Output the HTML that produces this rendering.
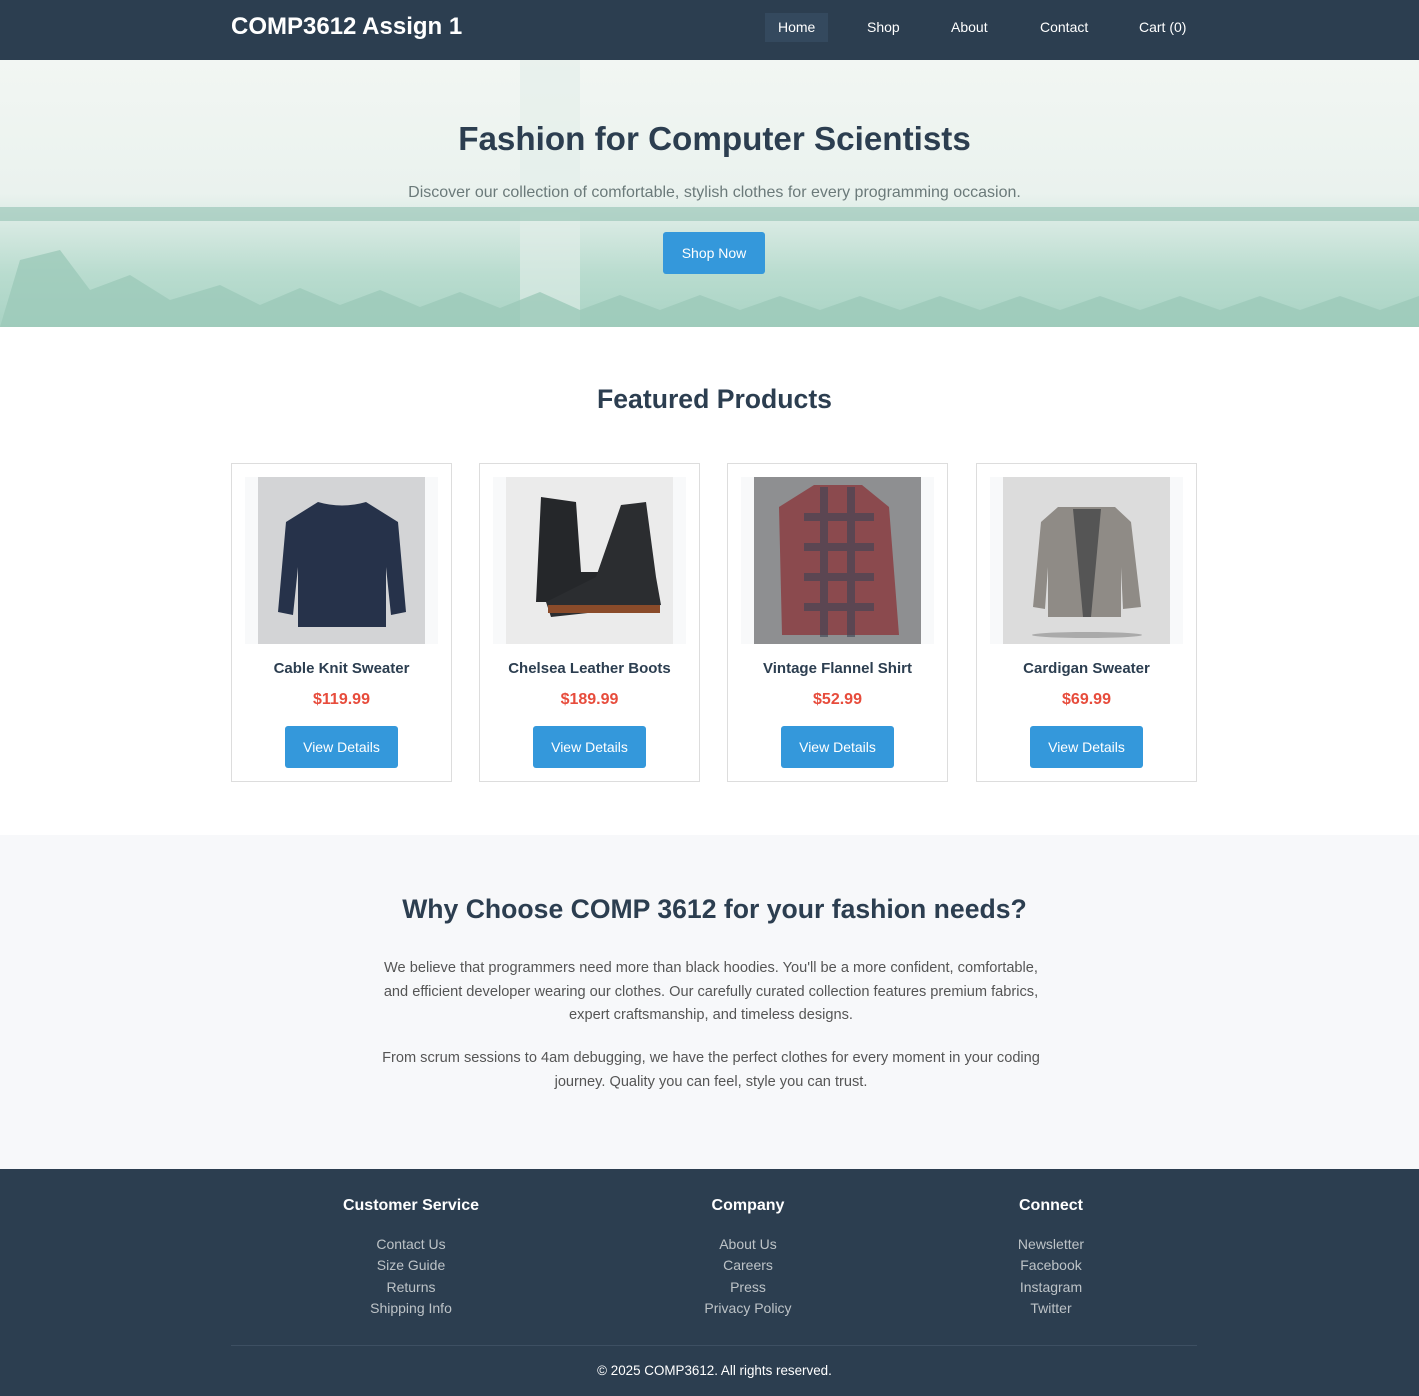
<!DOCTYPE html>
<html><head><meta charset="utf-8"><style>
*{margin:0;padding:0;box-sizing:border-box}
body{width:1419px;height:1396px;font-family:"Liberation Sans",Arial,sans-serif;background:#fff;position:relative;overflow:hidden;color:#2c3e50}
.nav{position:absolute;left:0;top:0;width:1419px;height:60px;background:#2c3e50}
.logo{position:absolute;left:231px;top:13px;color:#fff;font-size:24px;font-weight:bold}
.nav a{position:absolute;top:13px;height:29px;line-height:29px;color:#fff;font-size:14px;text-decoration:none;padding:0 13px}
.hero{position:absolute;left:0;top:60px;width:1419px;height:267px;overflow:hidden;background:linear-gradient(180deg,#f2f6f3 0%,#eaf2ee 50%,#b9dccf 80%,#a9d3c4 100%)}
.hero h1{position:absolute;left:5px;width:100%;top:61px;text-align:center;font-size:33.2px;color:#2c3e50}
.hero p{position:absolute;left:5px;width:100%;top:124px;text-align:center;font-size:16px;color:#6b7a7a}
.btn{position:absolute;background:#3498db;color:#fff;font-size:14px;text-align:center;border-radius:3px}
h2{position:absolute;left:5px;width:100%;text-align:center;font-size:26.6px;color:#2c3e50}
.card{position:absolute;top:463px;width:221px;height:319px;border:1px solid #ddd;background:#fff}
.imgw{position:absolute;left:13px;top:13px;width:193px;height:167px;background:#f8f9fa}
.imgw svg{position:absolute;left:13px;top:0}
.card .t{position:absolute;left:0;width:100%;top:196px;text-align:center;font-size:15px;font-weight:bold;color:#2c3e50}
.card .p{position:absolute;left:0;width:100%;top:227px;text-align:center;font-size:16px;font-weight:bold;color:#e74c3c}
.card .btn{left:53px;top:262px;width:113px;height:42px;line-height:42px}
.why{position:absolute;left:0;top:835px;width:1419px;height:334px;background:#f7f8fa}
.why p{position:absolute;left:379px;width:670px;text-align:center;font-size:14.6px;line-height:23.5px;color:#555}
.foot{position:absolute;left:0;top:1169px;width:1419px;height:227px;background:#2c3e50}
.col{position:absolute;top:28px;width:300px;margin-left:-150px;text-align:center}
.col h4{font-size:16px;color:#fff;margin-bottom:19px}
.col div{font-size:14px;color:#bdc3c7;line-height:21.3px}
.hr{position:absolute;left:231px;top:176px;width:966px;height:1px;background:#3d4f62}
.copy{position:absolute;left:5px;width:100%;top:194px;text-align:center;color:#fff;font-size:13.4px}
</style></head><body>
<div class="nav">
<div class="logo">COMP3612 Assign 1</div>
<a style="left:765px;background:#34495e">Home</a>
<a style="left:854px">Shop</a>
<a style="left:938px">About</a>
<a style="left:1027px">Contact</a>
<a style="left:1126px">Cart (0)</a>
</div>
<div class="hero">
<svg width="1419" height="267" style="position:absolute;left:0;top:0">
<rect x="520" y="0" width="60" height="267" fill="#e3efe9" opacity=".6"/>
<rect x="0" y="147" width="1419" height="14" fill="#9cc8b9" opacity=".7"/>
<g fill="#9cc9b9" opacity=".8">
<path d="M0 267 L20 200 L60 190 L90 230 L130 215 L170 240 L220 225 L260 245 L300 228 L340 245 L380 230 L420 247 L460 232 L500 248 L540 232 L580 250 L620 235 L660 250 L700 235 L740 250 L780 236 L820 250 L860 236 L900 250 L940 236 L980 250 L1020 236 L1060 250 L1100 236 L1140 250 L1180 236 L1220 250 L1260 236 L1300 250 L1340 236 L1380 250 L1419 236 L1419 267Z"/>
</g>
</svg>
<h1>Fashion for Computer Scientists</h1>
<p>Discover our collection of comfortable, stylish clothes for every programming occasion.</p>
<div class="btn" style="left:663px;top:172px;width:102px;height:42px;line-height:42px">Shop Now</div>
</div>
<h2 style="top:384px">Featured Products</h2>

<div class="card" style="left:231px"><div class="imgw"><svg width="167" height="167"><rect width="167" height="167" fill="#d3d4d6"/><path d="M60 25 Q84 32 108 25 L140 45 L148 135 L133 138 L128 90 L128 150 L40 150 L40 90 L35 138 L20 135 L28 45Z" fill="#26324a"/></svg></div><div class="t">Cable Knit Sweater</div><div class="p">$119.99</div><div class="btn">View Details</div></div>
<div class="card" style="left:479px"><div class="imgw"><svg width="167" height="167"><rect width="167" height="167" fill="#ebebeb"/><path d="M35 20 L70 25 L75 95 L120 95 L120 125 L30 125Z" fill="#25272a"/><path d="M115 28 L140 25 L150 100 L155 128 L45 140 L40 125 L90 100Z" fill="#2b2d30"/><rect x="42" y="128" width="112" height="8" fill="#8a4b2a"/></svg></div><div class="t">Chelsea Leather Boots</div><div class="p">$189.99</div><div class="btn">View Details</div></div>
<div class="card" style="left:727px"><div class="imgw"><svg width="167" height="167"><rect width="167" height="167" fill="#8e8f91"/><path d="M60 8 L108 8 L135 30 L145 158 L28 158 L25 30Z" fill="#8b4a4e"/><path d="M50 40 H120 M50 70 H120 M50 100 H120 M50 130 H120 M70 10 V160 M97 10 V160" stroke="#3c4555" stroke-width="8" opacity=".6"/></svg></div><div class="t">Vintage Flannel Shirt</div><div class="p">$52.99</div><div class="btn">View Details</div></div>
<div class="card" style="left:976px"><div class="imgw"><svg width="167" height="167"><rect width="167" height="167" fill="#dcdcdc"/><path d="M55 30 L112 30 L128 45 L138 130 L120 132 L118 90 L118 140 L45 140 L45 90 L42 132 L30 130 L38 45Z" fill="#8f8b86"/><path d="M70 32 L80 140 L88 140 L98 32Z" fill="#555"/><ellipse cx="84" cy="158" rx="55" ry="3" fill="#aaa"/></svg></div><div class="t">Cardigan Sweater</div><div class="p">$69.99</div><div class="btn">View Details</div></div>

<div class="why">
<h2 style="top:59px">Why Choose COMP 3612 for your fashion needs?</h2>
<p style="top:122px;left:376px">We believe that programmers need more than black hoodies. You'll be a more confident, comfortable, and efficient developer wearing our clothes. Our carefully curated collection features premium fabrics, expert craftsmanship, and timeless designs.</p>
<p style="top:212px;left:366px;width:690px">From scrum sessions to 4am debugging, we have the perfect clothes for every moment in your coding journey. Quality you can feel, style you can trust.</p>
</div>
<div class="foot">
<div class="col" style="left:411px"><h4>Customer Service</h4><div>Contact Us</div><div>Size Guide</div><div>Returns</div><div>Shipping Info</div></div>
<div class="col" style="left:748px"><h4>Company</h4><div>About Us</div><div>Careers</div><div>Press</div><div>Privacy Policy</div></div>
<div class="col" style="left:1051px"><h4>Connect</h4><div>Newsletter</div><div>Facebook</div><div>Instagram</div><div>Twitter</div></div>
<div class="hr"></div>
<div class="copy">© 2025 COMP3612. All rights reserved.</div>
</div>
</body></html>
